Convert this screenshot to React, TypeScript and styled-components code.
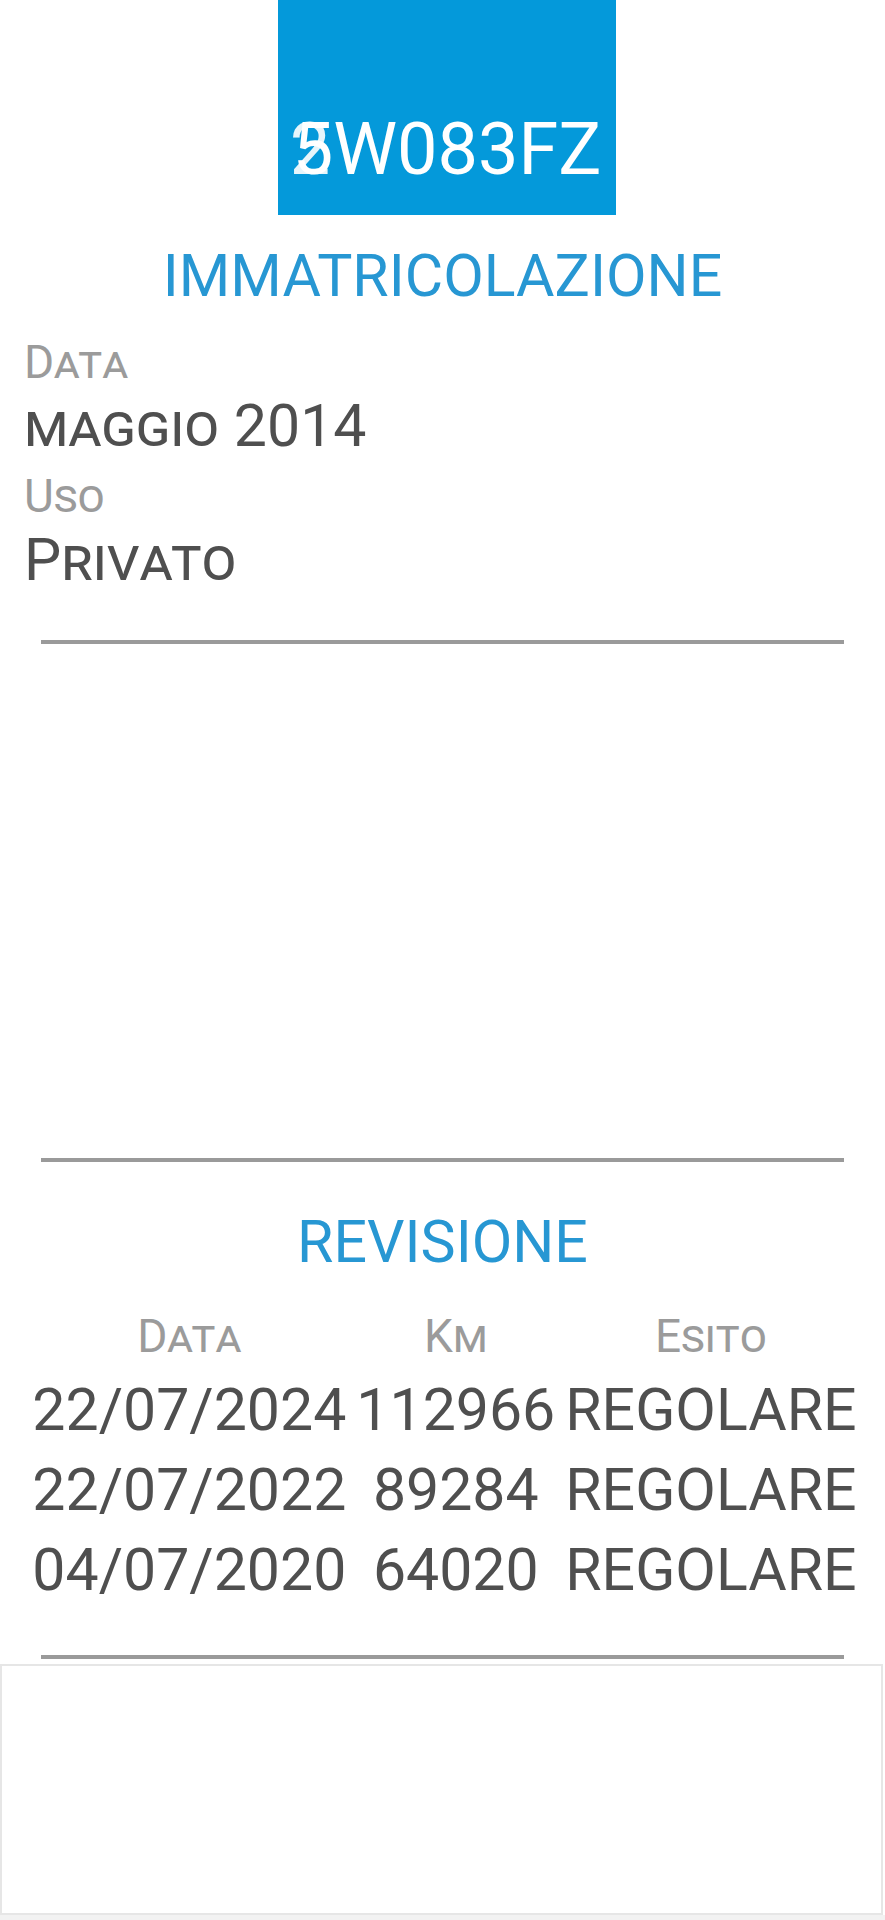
import styled, { createGlobalStyle } from 'styled-components';

const GlobalStyle = createGlobalStyle`
  html, body {
    margin: 0;
    padding: 0;
    background: #ffffff;
  }
  body {
    font-family: Roboto, "Liberation Sans", Arial, sans-serif;
    color: #505050;
  }
`;

const Page = styled.div`
  display: flex;
  flex-direction: column;
  min-height: 1920px;
  background: #ffffff;
`;

const PlateWrap = styled.div`
  display: flex;
  padding-left: 278px;
`;

const Plate = styled.div`
  width: 338px;
  height: 215px;
  box-sizing: border-box;
  background: #0499da;
  display: flex;
  align-items: flex-end;
  justify-content: center;
  padding-bottom: 29px;
`;

const PlateText = styled.div`
  font-size: 72px;
  line-height: 72px;
  color: #ffffff;
  white-space: nowrap;
`;

const Overlap = styled.span`
  position: relative;
  display: inline-block;
`;

const Ghost = styled.span`
  position: absolute;
  left: -3px;
  top: 0;
  opacity: 0.9;
`;

const SectionTitle = styled.h2<{ $top: number }>`
  margin: ${p => p.$top}px 0 0;
  font-size: 59px;
  line-height: 69.6px;
  font-weight: 400;
  color: #2797d3;
  text-align: center;
`;

const Info = styled.dl`
  margin: 23px 0 0;
  padding-left: 24px;
  display: flex;
  flex-direction: column;
  gap: 6px;
`;

const Field = styled.div`
  display: flex;
  flex-direction: column;
`;

const Label = styled.dt`
  font-size: 46px;
  line-height: 56px;
  font-variant: small-caps;
  color: #9b9b9b;
`;

const Value = styled.dd`
  margin: 0;
  font-size: 59px;
  line-height: 72px;
  font-variant: small-caps;
  color: #4f4f4f;
`;

const Divider = styled.hr<{ $top: number }>`
  margin: ${p => p.$top}px 41px 0;
  height: 4px;
  border: none;
  background: #9a9a9a;
`;

const Blank = styled.div`
  height: 514px;
`;

const Table = styled.div`
  margin-top: 29px;
  padding-left: 4px;
  display: grid;
  grid-template-columns: repeat(3, auto);
  column-gap: 10px;
  justify-content: center;
`;

const HeadCell = styled.div`
  font-size: 46px;
  line-height: 62px;
  margin-bottom: 3px;
  font-variant: small-caps;
  color: #9b9b9b;
  text-align: center;
`;

const Cell = styled.div`
  font-size: 59px;
  line-height: 80px;
  color: #4f4f4f;
  text-align: center;
  white-space: nowrap;
`;

const AdCard = styled.div`
  margin-top: 5px;
  height: 251px;
  width: 883px;
  box-sizing: border-box;
  border: 2px solid #e6e6e6;
  background: #ffffff;
`;

const BottomStrip = styled.div`
  flex: 1;
  background: #f2f2f2;
`;

const revisioni = [
  { data: '22/07/2024', km: '112966', esito: 'REGOLARE' },
  { data: '22/07/2022', km: '89284', esito: 'REGOLARE' },
  { data: '04/07/2020', km: '64020', esito: 'REGOLARE' },
];

const App = (): JSX.Element => (
  <Page>
    <GlobalStyle />
    <PlateWrap>
      <Plate>
        <PlateText>
          <Overlap>
            5<Ghost>2</Ghost>
          </Overlap>
          W083FZ
        </PlateText>
      </Plate>
    </PlateWrap>

    <SectionTitle $top={26}>IMMATRICOLAZIONE</SectionTitle>
    <Info>
      <Field>
        <Label>Data</Label>
        <Value>maggio 2014</Value>
      </Field>
      <Field>
        <Label>Uso</Label>
        <Value>Privato</Value>
      </Field>
    </Info>

    <Divider $top={44} />
    <Blank />
    <Divider $top={0} />

    <SectionTitle $top={45}>REVISIONE</SectionTitle>
    <Table>
      <HeadCell>Data</HeadCell>
      <HeadCell>Km</HeadCell>
      <HeadCell>Esito</HeadCell>
      {revisioni.map(r => [
        <Cell key={`${r.data}-d`}>{r.data}</Cell>,
        <Cell key={`${r.data}-k`}>{r.km}</Cell>,
        <Cell key={`${r.data}-e`}>{r.esito}</Cell>,
      ])}
    </Table>

    <Divider $top={45} />
    <AdCard />
    <BottomStrip />
  </Page>
);

export default App;
